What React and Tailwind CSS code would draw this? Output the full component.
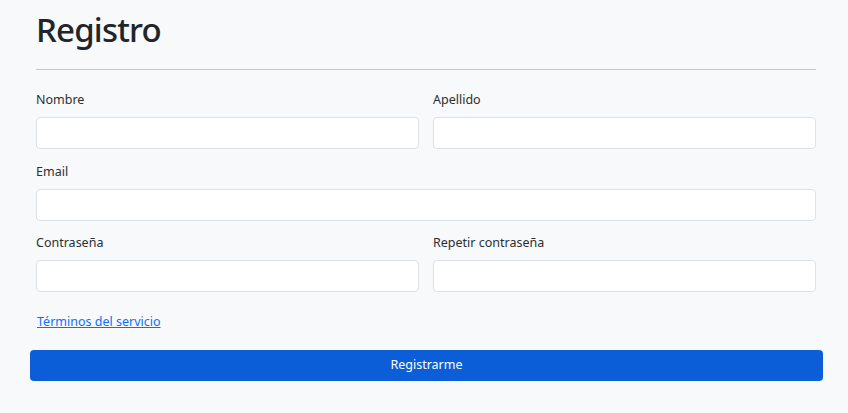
export default function App() {
  const font = { fontFamily: '"Noto Sans", "Open Sans", Arial, sans-serif' };

  // Campo de formulario con etiqueta
  function Field({ label, type = "text" }) {
    return (
      <div className="flex flex-col">
        <label className="text-[12.5px] leading-[20px] text-[#2b2f33] mb-[7px]">{label}</label>
        <input
          type={type}
          className="h-[32px] w-full rounded-[4px] border border-[#dee2e6] bg-white px-3 text-[13px] outline-none"
        />
      </div>
    );
  }

  return (
    <div className="min-h-screen w-full bg-[#f8f9fa] text-[#212529]" style={font}>
      <div className="px-[36px] pt-[10px] w-[852px]">
        <h1 className="text-[33px] leading-[40px] font-medium tracking-[-0.8px] text-[#212529]">Registro</h1>
        <hr className="mt-[19px] border-0 border-t border-[#c6c8ca] w-[780px]" />

        <div className="mt-[20px] w-[780px] flex flex-col gap-[12.5px]">
          <div className="grid grid-cols-2 gap-[14px]">
            <Field label="Nombre" />
            <Field label="Apellido" />
          </div>
          <Field label="Email" type="email" />
          <div className="grid grid-cols-2 gap-[14px]">
            <Field label="Contraseña" type="password" />
            <Field label="Repetir contraseña" type="password" />
          </div>
        </div>

        <div className="mt-[18px] h-[20px] leading-[20px]">
          <a href="#" className="text-[12.5px] text-[#0d6efd] underline pl-[1px]">
            Términos del servicio
          </a>
        </div>

        <button className="block mt-[19.5px] -ml-[6px] h-[31.5px] w-[793px] rounded-[4px] bg-[#0b5ed7] text-[12.5px] text-white">
          Registrarme
        </button>
      </div>
    </div>
  );
}
